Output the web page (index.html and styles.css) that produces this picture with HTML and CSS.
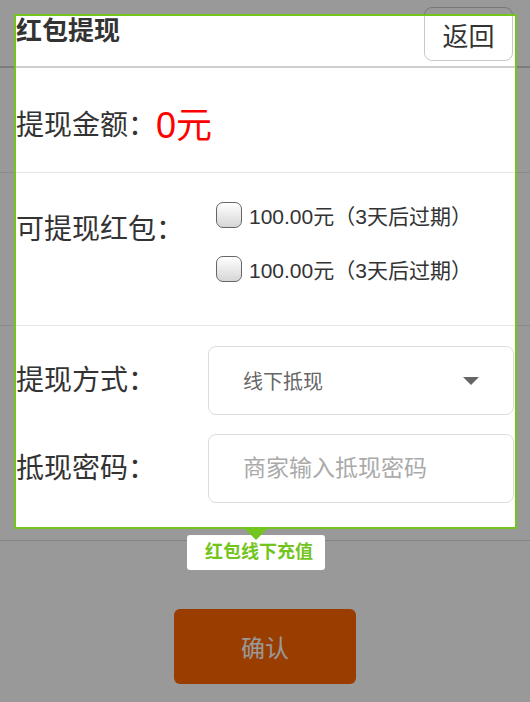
FILE: index.html
```html
<!DOCTYPE html>
<html lang="zh-CN">
<head>
<meta charset="utf-8">
<title>红包提现</title>
<link rel="stylesheet" href="styles.css">
</head>
<body>
<div class="page">
  <header class="topbar">
    <h1 class="title">红包提现</h1>
    <button class="back" type="button">返回</button>
  </header>
  <section class="row-amount">
    <span class="label">提现金额：</span><span class="amount">0元</span>
  </section>
  <section class="row-packets">
    <span class="label">可提现红包：</span>
    <ul class="options">
      <li class="option"><input type="checkbox" class="check"><span>100.00元（3天后过期）</span></li>
      <li class="option"><input type="checkbox" class="check"><span>100.00元（3天后过期）</span></li>
    </ul>
  </section>
  <section class="fields">
    <div class="field-row">
      <span class="label">提现方式：</span>
      <div class="select"><span>线下抵现</span><svg class="caret" viewBox="0 0 16 8"><polygon points="0,0 16,0 8,8" fill="#666"/></svg></div>
    </div>
    <div class="field-row">
      <span class="label">抵现密码：</span>
      <input class="input" type="text" placeholder="商家输入抵现密码">
    </div>
  </section>
  <div class="actions"><button class="confirm" type="button">确认</button></div>
</div>
<div class="guide-mask"></div>
<div class="guide-tip">红包线下充值</div>
<div class="guide-arrow"></div>
</body>
</html>
```
FILE: styles.css
```css
html, body {
  margin: 0;
  height: 702px;
  overflow: hidden;
  background: #fff;
}
body {
  position: relative;
  font-family: "Liberation Sans", "Noto Sans CJK SC", sans-serif;
  color: #333;
}
.topbar {
  display: flex;
  justify-content: space-between;
  align-items: flex-start;
  height: 66px;
  padding: 0 17px 0 16px;
  border-bottom: 2px solid #cfcfcf;
}
.title {
  margin: 14px 0 0;
  font-size: 26px;
  line-height: 34px;
  font-weight: bold;
}
.back {
  margin-top: 7px;
  width: 89px;
  height: 54px;
  padding: 0;
  border: 1px solid #c8c8c8;
  border-radius: 8px;
  background: #fff;
  font: inherit;
  font-size: 26px;
  color: #333;
}
.label {
  flex: none;
  font-size: 28px;
  line-height: 36px;
}
.row-amount {
  display: flex;
  align-items: center;
  height: 92px;
  padding: 12px 0 0 16px;
  border-bottom: 1px solid #e6e6e6;
}
.amount {
  font-size: 36px;
  line-height: 40px;
  color: #f00;
}
.row-packets {
  display: flex;
  align-items: flex-start;
  height: 152px;
  padding-left: 16px;
  border-bottom: 1px solid #e6e6e6;
}
.row-packets .label {
  width: 200px;
  margin-top: 39px;
}
.options {
  list-style: none;
  margin: 29px 0 0;
  padding: 0;
  display: flex;
  flex-direction: column;
  gap: 28px;
}
.option {
  display: flex;
  align-items: center;
  height: 26px;
  font-size: 21px;
}
.check {
  appearance: none;
  -webkit-appearance: none;
  flex: none;
  margin: 0 7px 0 0;
  width: 26px;
  height: 26px;
  box-sizing: border-box;
  border: 1.5px solid #666;
  border-radius: 7px;
  background: linear-gradient(#fff, #d6d6d6);
}
.fields {
  display: flex;
  flex-direction: column;
  gap: 19px;
  padding: 20px 16px 37px;
  border-bottom: 1px solid #ddd;
}
.field-row {
  display: flex;
  align-items: center;
}
.field-row .label {
  width: 192px;
}
.select, .input {
  flex: 1;
  min-width: 0;
  height: 69px;
  box-sizing: border-box;
  border: 1px solid #ddd;
  border-radius: 8px;
  padding: 0 34px;
  background: #fff;
}
.select {
  display: flex;
  align-items: center;
  justify-content: space-between;
  font-size: 20px;
  color: #666;
}
.caret {
  width: 16px;
  height: 8px;
}
.input {
  font: inherit;
  font-size: 23px;
  color: #333;
  outline: none;
}
.input::placeholder {
  color: #aaa;
}
.actions {
  display: flex;
  justify-content: center;
  padding-top: 68px;
}
.confirm {
  width: 182px;
  height: 75px;
  border: 0;
  border-radius: 6px;
  background: #f60;
  color: #fff;
  font: inherit;
  font-size: 24px;
}
.guide-mask {
  position: absolute;
  left: 14px;
  top: 14px;
  width: 499px;
  height: 511px;
  border: 2px solid #73c41c;
  box-shadow: 0 0 0 1200px rgba(0, 0, 0, 0.4);
  pointer-events: none;
  z-index: 10;
}
.guide-tip {
  position: absolute;
  left: 187px;
  top: 535px;
  width: 138px;
  height: 35px;
  box-sizing: border-box;
  padding-left: 18px;
  background: #fff;
  border-radius: 3px;
  color: #73c41c;
  font-size: 18px;
  font-weight: bold;
  line-height: 35px;
  z-index: 11;
}
.guide-arrow {
  position: absolute;
  left: 245px;
  top: 529px;
  width: 0;
  height: 0;
  border-left: 11px solid transparent;
  border-right: 11px solid transparent;
  border-top: 11px solid #73c41c;
  z-index: 12;
}
```
